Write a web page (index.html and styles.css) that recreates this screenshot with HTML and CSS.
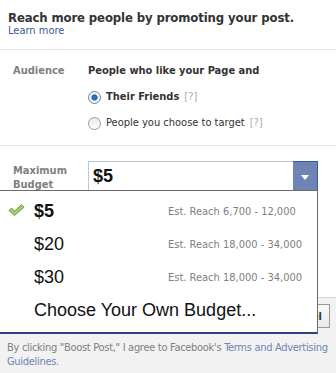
FILE: index.html
```html
<!DOCTYPE html>
<html lang="en">
<head>
    <meta charset="UTF-8">
    <meta name="viewport" content="width=device-width, initial-scale=1.0">
    <title>Boost Post</title>
    <link rel="stylesheet" href="styles.css">
</head>
<body>
    <div class="dialog">
        <div class="intro">
            <h1 class="title">Reach more people by promoting your post.</h1>
            <a href="#" class="learn">Learn more</a>
        </div>
        <div class="row audience">
            <div class="label">Audience</div>
            <div class="field">
                <div class="lead">People who like your Page and</div>
                <label class="option"><span class="radio on"></span><b>Their Friends</b><span class="help">[?]</span></label>
                <label class="option"><span class="radio"></span>People you choose to target<span class="help">[?]</span></label>
            </div>
        </div>
        <div class="row budget">
            <div class="label">Maximum<br>Budget</div>
            <div class="field">
                <div class="select">
                    <span class="value">$5</span>
                    <span class="arrow"></span>
                </div>
            </div>
        </div>
        <div class="footer">
            <div class="buttons">
                <button class="btn">Cancel</button>
            </div>
            <p class="terms">By clicking "Boost Post," I agree to Facebook's <a href="#">Terms and Advertising Guidelines</a>.</p>
        </div>

        <!-- 下拉菜单 -->
        <ul class="menu">
            <li class="item selected">
                <span class="check">
                    <svg width="17" height="12" viewBox="0 0 17 12"><path d="M1 6.5 L3.5 4 L6.5 7 L13.5 0.8 L16 3.2 L6.5 11.5 Z" fill="#9dcf6f" stroke="#6aa143" stroke-width="1" stroke-linejoin="round"/></svg>
                </span>
                <span class="amount">$5</span>
                <span class="reach">Est. Reach 6,700 - 12,000</span>
            </li>
            <li class="item">
                <span class="amount">$20</span>
                <span class="reach">Est. Reach 18,000 - 34,000</span>
            </li>
            <li class="item">
                <span class="amount">$30</span>
                <span class="reach">Est. Reach 18,000 - 34,000</span>
            </li>
            <li class="item">
                <span class="amount">Choose Your Own Budget...</span>
            </li>
        </ul>
    </div>
</body>
</html>
```

FILE: styles.css
```css
body { margin: 0; padding: 0; background: #fff; font-family: 'DejaVu Sans Condensed', 'Liberation Sans', sans-serif; font-stretch: condensed; font-size: 11px; color: #333; }
a { color: #3b5998; text-decoration: none; }
ul, p, h1 { margin: 0; padding: 0; }
ul { list-style: none; }

.dialog { position: relative; width: 336px; height: 373px; overflow: hidden; }

/* 顶部说明 */
.intro { padding: 10px 8px 12px; border-bottom: 1px solid #e5e5e5; }
.title { font-size: 13px; line-height: 15px; font-weight: bold; color: #333; white-space: nowrap; letter-spacing: -0.12px; }
.learn { display: block; font-size: 11px; line-height: 12px; }

/* 表单行 */
.row { display: flex; padding-left: 13px; }
.label { width: 75px; flex-shrink: 0; font-size: 11px; font-weight: bold; line-height: 14px; color: #808080; }
.field { flex: 1; }

.audience { padding-top: 14px; padding-bottom: 9px; border-bottom: 1px solid #e5e5e5; }
.lead { font-weight: bold; line-height: 14px; margin-bottom: 6px; }
.option { display: flex; align-items: center; height: 26px; line-height: 14px; }
.option b { font-weight: bold; }
.help { margin-left: 5px; color: #aaa; }
.radio { width: 11px; height: 11px; margin-right: 5px; border: 1px solid #9a9a9a; border-radius: 50%; background: linear-gradient(#e9e9e9, #fdfdfd); box-sizing: content-box; }
.radio.on { background: radial-gradient(circle, #2f86d6 0, #1d5fa8 2.5px, #e8eef5 3.5px, #fff 6px); border-color: #6d7f93; }

.budget { padding-top: 15px; height: 151px; box-sizing: border-box; }
.budget .label { padding-top: 3px; line-height: 14px; }
.select { display: flex; width: 230px; height: 30px; box-sizing: border-box; border: 1px solid #bdc7d8; border-right: none; border-bottom: none; background: #fff; }
.select .value { flex: 1; padding-left: 4px; font-family: 'Liberation Sans', Arial, sans-serif; font-stretch: normal; font-size: 18px; font-weight: bold; line-height: 28px; color: #111; }
.select .arrow { position: relative; width: 24px; margin-top: -1px; background: #6d84b4; border-top: 1px solid #3b5998; border-right: 1px solid #3b5998; }
.select .arrow::after { content: ''; position: absolute; left: 8px; top: 13px; border-left: 4.5px solid transparent; border-right: 4.5px solid transparent; border-top: 5px solid #fff; }

/* 底部 */
.footer { background: #f2f2f2; border-top: 1px solid #d4d4d4; height: 76px; }
.buttons { display: flex; justify-content: flex-end; padding: 6px 6px 0 0; }
.btn { height: 24px; padding: 0 7px; border: 1px solid #999; background: linear-gradient(#f9f9f9, #e9e9e9); font-family: inherit; font-stretch: condensed; font-size: 11px; font-weight: bold; color: #333; }
.terms { padding: 13px 0 0 7px; font-size: 11px; line-height: 14px; letter-spacing: -0.3px; color: #808080; }
.terms a { color: #6d84b4; }

/* 下拉菜单 */
.menu { position: absolute; left: -1px; top: 190px; width: 317px; padding: 4px 0 5px; background: #fff; border: 1px solid #6c6c6c; border-bottom: 2px solid #29447e; }
.item { position: relative; display: flex; align-items: center; height: 33px; padding-left: 34px; }
.amount { width: 134px; font-family: 'Liberation Sans', Arial, sans-serif; font-stretch: normal; font-size: 18px; color: #111; white-space: nowrap; }
.selected .amount { font-weight: bold; }
.reach { font-size: 11px; color: #808080; white-space: nowrap; }
.check { position: absolute; left: 8px; top: 9px; }
```
